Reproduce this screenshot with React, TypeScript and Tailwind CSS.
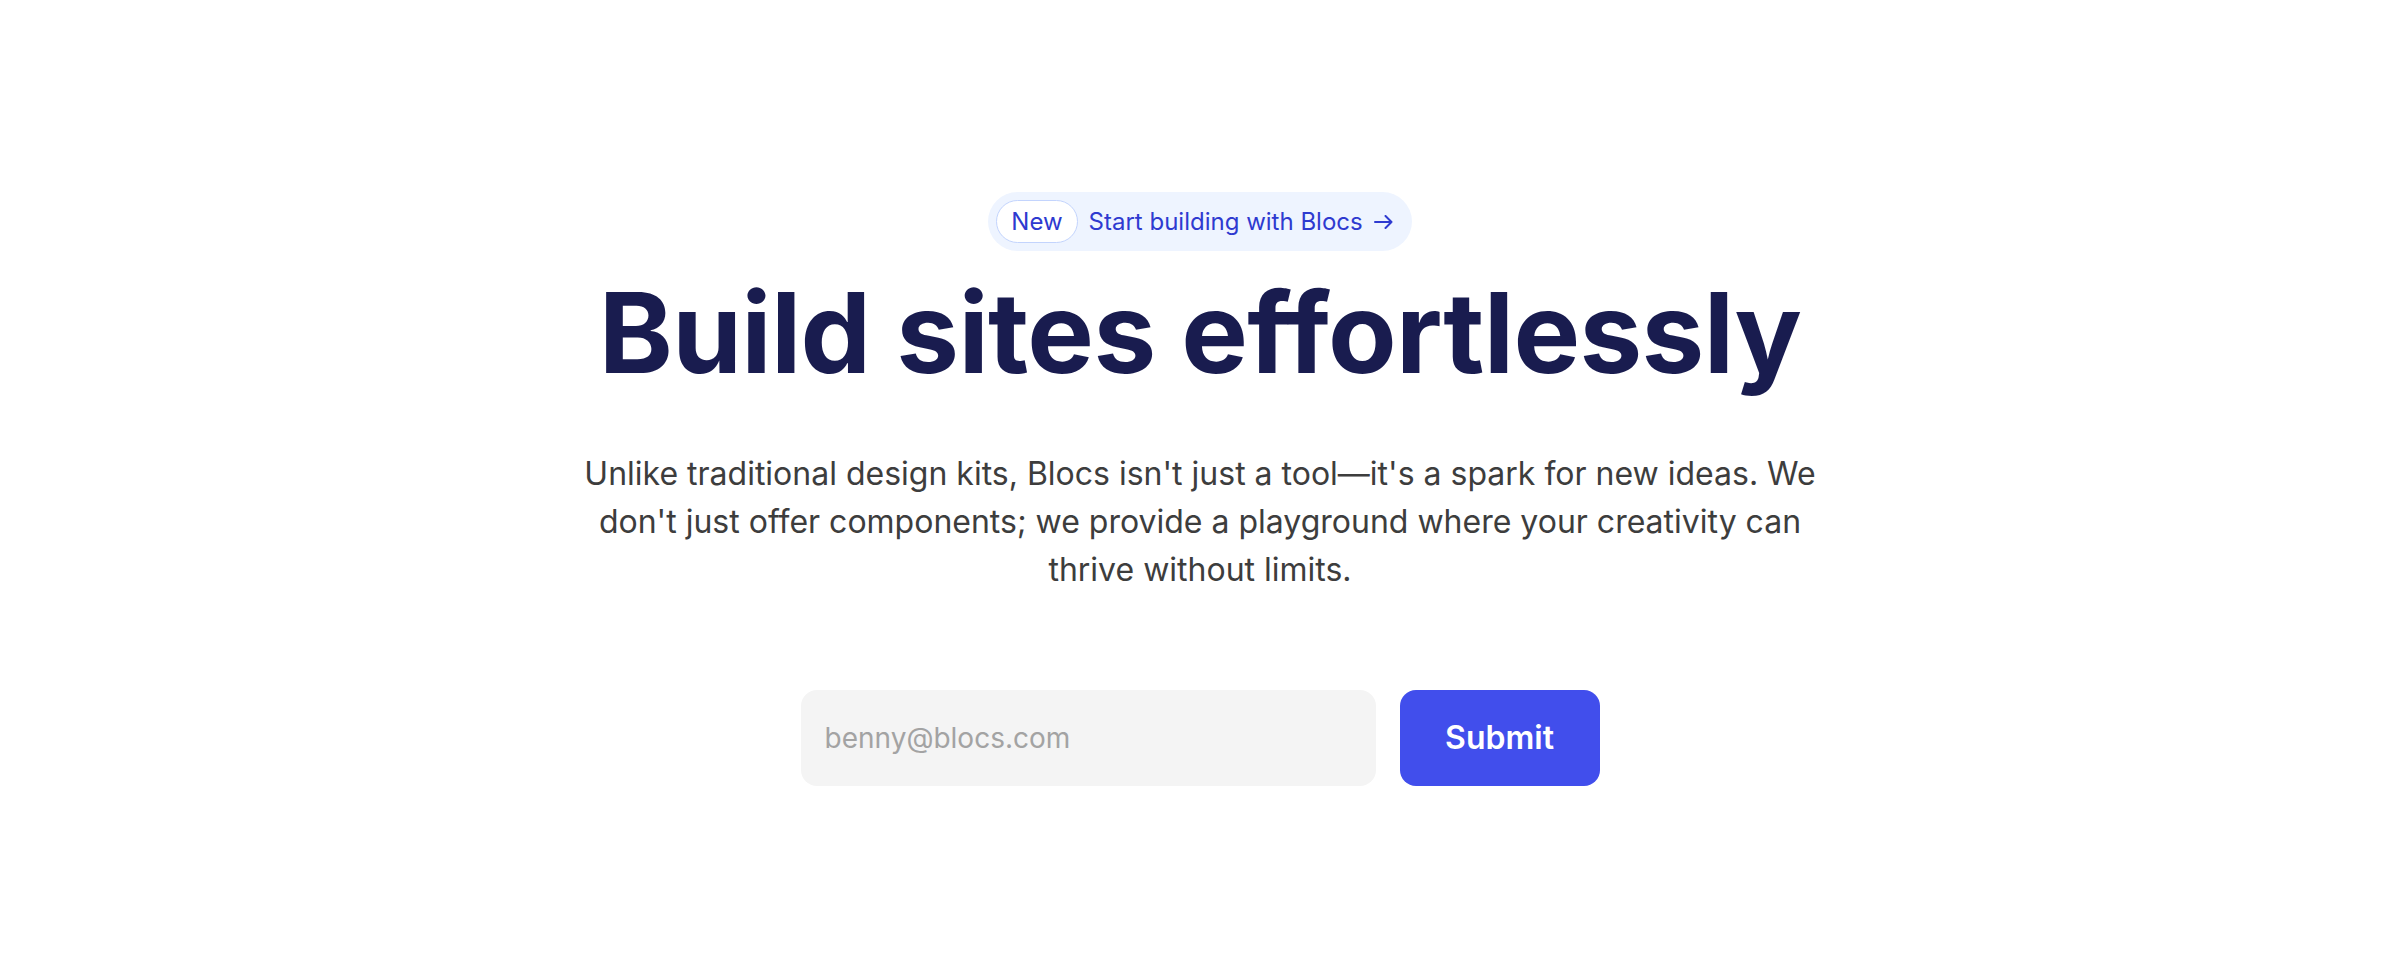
import React from 'react';

const App: React.FC = () => {
  return (
    <div className="min-h-screen bg-white flex flex-col items-center justify-center font-['Inter',sans-serif]">
      {/* announcement pill */}
      <a href="#" className="flex items-center gap-[11px] rounded-full bg-[#eef4ff] p-2 pr-[19px]">
        <span className="flex h-[43px] items-center rounded-full border-[1.5px] border-[#c3d4fd] bg-white px-[14px] text-[24px] text-[#2e3ad0]">
          New
        </span>
        <span className="flex items-center gap-[11px] text-[24px] text-[#2e3ad0]">
          Start building with Blocs
          <svg width="19" height="14" viewBox="0 0 19 14" fill="none" stroke="currentColor" strokeWidth="2" strokeLinecap="round" strokeLinejoin="round">
            <path d="M1 7h16.5M11.5 1l6 6-6 6" />
          </svg>
        </span>
      </a>

      <h1 className="mt-[25px] text-[112px] leading-none font-bold tracking-[-0.006em] text-[#191c4f]">
        Build sites effortlessly
      </h1>

      <p className="mt-[62px] max-w-[1250px] text-center text-[32px] leading-[48px] text-[#3d3d3d]">
        Unlike traditional design kits, Blocs isn't just a tool—it's a spark for new ideas. We don't just offer components; we
        provide a playground where your creativity can thrive without limits.
      </p>

      <form className="mt-24 flex gap-6" onSubmit={(e) => e.preventDefault()}>
        <input
          type="email"
          placeholder="benny@blocs.com"
          className="h-[96px] w-[575px] rounded-2xl bg-[#f4f4f4] px-6 text-[28px] text-neutral-800 placeholder:text-[#a3a3a3] outline-none"
        />
        <button type="submit" className="h-[96px] w-[200px] rounded-2xl bg-[#414eec] text-[32px] font-semibold text-white">
          Submit
        </button>
      </form>
    </div>
  );
};

export default App;
